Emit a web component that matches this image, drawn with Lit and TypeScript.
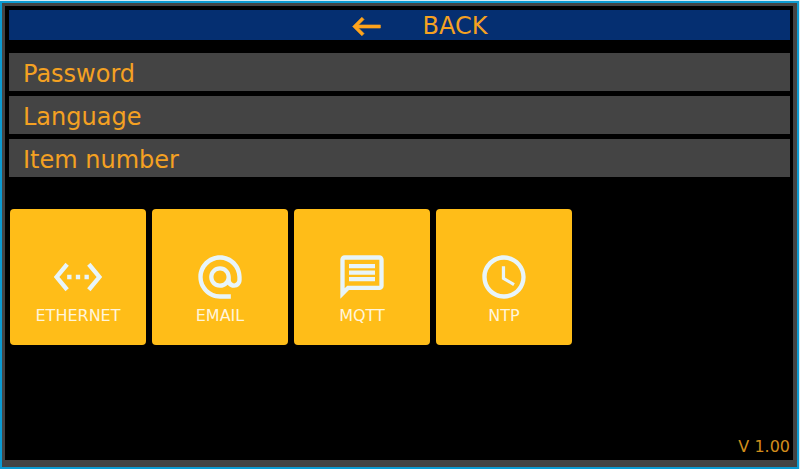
import { LitElement, html, css, svg } from "lit";
import { customElement } from "lit/decorators.js";

const ICONS = {
  back: svg`<path stroke="currentColor" stroke-width=".4" d="M21 11H6.83l3.58-3.59L9 6l-6 6 6 6 1.41-1.41L6.83 13H21z"/>`,
  ethernet: svg`<path d="M7.77 6.76 6.23 5.48.82 12l5.41 6.52 1.54-1.28L3.42 12l4.35-5.24zM7 13h2v-2H7v2zm10-2h-2v2h2v-2zm-6 2h2v-2h-2v2zm6.77-7.52-1.54 1.28L20.58 12l-4.35 5.24 1.54 1.28L23.18 12l-5.41-6.52z"/>`,
  email: svg`<path d="M12 2C6.48 2 2 6.48 2 12s4.48 10 10 10h5v-2h-5c-4.34 0-8-3.66-8-8s3.66-8 8-8 8 3.66 8 8v1.43c0 .79-.71 1.57-1.5 1.57s-1.5-.78-1.5-1.57V12c0-2.76-2.24-5-5-5s-5 2.24-5 5 2.24 5 5 5c1.38 0 2.64-.56 3.54-1.47.65.89 1.77 1.47 2.96 1.47 1.97 0 3.5-1.6 3.5-3.57V12c0-5.52-4.48-10-10-10zm0 13c-1.66 0-3-1.34-3-3s1.34-3 3-3 3 1.34 3 3-1.34 3-3 3z"/>`,
  mqtt: svg`<path d="M20 2H4c-1.1 0-2 .9-2 2v18l4-4h14c1.1 0 2-.9 2-2V4c0-1.1-.9-2-2-2zm0 14H5.2L4 17.2V4h16v12zM6 12h12v2H6zm0-3h12v2H6zm0-3h12v2H6z"/>`,
  ntp: svg`<path d="M11.99 2C6.47 2 2 6.48 2 12s4.47 10 9.99 10C17.52 22 22 17.52 22 12S17.52 2 11.99 2zM12 20c-4.42 0-8-3.58-8-8s3.58-8 8-8 8 3.58 8 8-3.58 8-8 8zm.5-13H11v6l5.25 3.15.75-1.23-4.5-2.67z"/>`,
};

@customElement("app-root")
export class AppRoot extends LitElement {
  static styles = css`
    :host {
      display: flex;
      flex-direction: column;
      box-sizing: border-box;
      min-height: 100vh;
      padding-top: 1px;
      background: #d6ecf5;
      font-family: Verdana, "DejaVu Sans", sans-serif;
      color: #f4a122;
    }
    .frame {
      flex: 1;
      display: flex;
      margin-right: 1px;
      padding: 2px;
      background: #0c9bd2;
    }
    .bezel {
      flex: 1;
      display: flex;
      padding: 3px 4px 7px 3px;
      background: #444;
    }
    .screen {
      flex: 1;
      display: flex;
      flex-direction: column;
      padding: 4px 3px 3px 4px;
      background: #000;
    }
    button {
      margin: 0;
      border: 0;
      font: inherit;
      color: inherit;
      cursor: pointer;
    }
    svg {
      display: block;
      fill: currentColor;
    }
    .back {
      display: flex;
      align-items: center;
      justify-content: center;
      gap: 38px;
      height: 30px;
      padding: 2px 0 0 36px;
      background: #052f71;
      font-size: 24px;
      line-height: 28px;
    }
    .back svg {
      width: 37px;
      height: 37px;
      color: #ffa41c;
    }
    .settings {
      display: grid;
      gap: 5px;
      margin: 13px 0 0;
      padding: 0;
      list-style: none;
    }
    .settings button {
      display: block;
      width: 100%;
      padding: 7px 14px 3px;
      background: #444;
      font-size: 24px;
      line-height: 28px;
      text-align: left;
    }
    .tiles {
      display: flex;
      flex-wrap: wrap;
      gap: 6px;
      margin-top: 32px;
      padding-left: 1px;
    }
    .tile {
      display: flex;
      flex-direction: column;
      align-items: center;
      width: 136px;
      height: 136px;
      padding: 42px 0 0;
      border-radius: 4px;
      background: #ffbd18;
      font-size: 16px;
      line-height: 20px;
      color: #fff5dc;
    }
    .tile svg {
      width: 52px;
      height: 52px;
      margin-bottom: 3px;
      color: #e8f5fa;
    }
    .version {
      margin: auto 0 0;
      font-size: 16px;
      line-height: 20px;
      text-align: right;
      color: #d18d1c;
    }
  `;

  private settings = ["Password", "Language", "Item number"];

  private tiles = [
    { label: "ETHERNET", icon: ICONS.ethernet },
    { label: "EMAIL", icon: ICONS.email },
    { label: "MQTT", icon: ICONS.mqtt },
    { label: "NTP", icon: ICONS.ntp },
  ];

  private icon(shape: unknown) {
    return html`<svg viewBox="0 0 24 24" aria-hidden="true">${shape}</svg>`;
  }

  render() {
    return html`
      <div class="frame">
        <div class="bezel">
          <main class="screen">
            <button class="back" type="button">${this.icon(ICONS.back)}<span>BACK</span></button>
            <ul class="settings">
              ${this.settings.map((name) => html`<li><button type="button">${name}</button></li>`)}
            </ul>
            <nav class="tiles">
              ${this.tiles.map(
                (tile) => html`<button class="tile" type="button">
                  ${this.icon(tile.icon)}<span>${tile.label}</span>
                </button>`
              )}
            </nav>
            <p class="version">V 1.00</p>
          </main>
        </div>
      </div>
    `;
  }
}
